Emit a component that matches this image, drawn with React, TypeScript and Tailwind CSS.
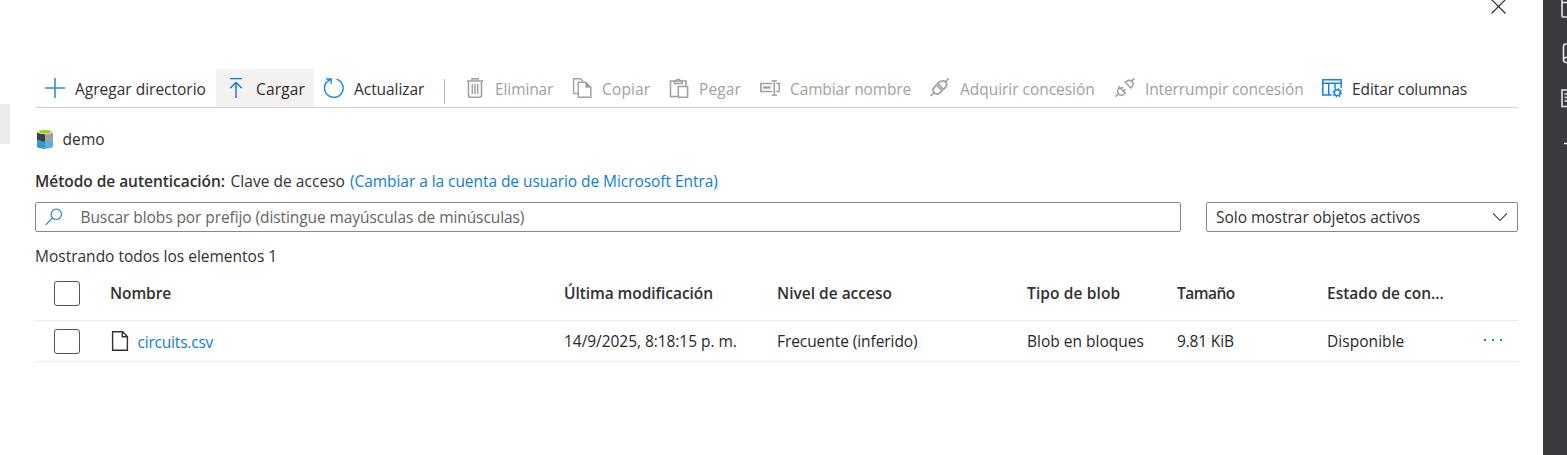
import React from "react";

type IconProps = { children: React.ReactNode; className?: string };

function Icon({ children, className = "" }: IconProps) {
  return (
    <svg
      viewBox="0 0 20 20"
      width="20"
      height="20"
      fill="none"
      stroke="currentColor"
      strokeWidth="1.2"
      className={"shrink-0 " + className}
    >
      {children}
    </svg>
  );
}

const PlusIcon = () => (
  <Icon className="text-[#2f8bdb]">
    <path d="M10 0v20M0 10h20" strokeWidth="1.6" />
  </Icon>
);

const UploadIcon = () => (
  <Icon className="text-[#1a73c4]">
    <path d="M4 .6h12M10 20V4.5M4.3 10L10 4.4l5.700 5.600" strokeWidth="1.4" />
  </Icon>
);

const RefreshIcon = () => (
  <Icon className="text-[#1583dc]">
    <path d="M12.6 1.200a9.300 9.300 0 1 1-7.900 1.100" strokeWidth="1.4" />
    <path d="M2.200 1h4.900v4.800" strokeWidth="1.4" />
    <path d="M7 1L4.300 3.300" strokeWidth="1.2" />
  </Icon>
);

const TrashIcon = () => (
  <Icon>
    <path d="M2 3h16M7 3V.8h6V3" strokeWidth="1.5" />
    <path d="M3.500 3v14.500a1.800 1.800 0 0 0 1.800 1.800h9.400a1.800 1.800 0 0 0 1.800-1.800V3" strokeWidth="1.6" />
    <path d="M7.300 6v10M10 6v10M12.700 6v10" strokeWidth="1.5" />
  </Icon>
);

const CopyIcon = () => (
  <Icon>
    <path d="M6 15.500H1.600V.7h6.800l2.800 2.800" strokeWidth="1.4" />
    <path d="M6.300 4.300h7.500l5 5v10H6.300z" strokeWidth="1.5" />
    <path d="M13.800 4.300v5h5z" fill="currentColor" strokeWidth=".8" />
  </Icon>
);

const PasteIcon = () => (
  <Icon>
    <path d="M8.800 18.500H1.500V3h15.500v5" strokeWidth="1.6" />
    <path d="M5.300 5.500V3h2.200a1.800 1.800 0 0 1 3.600 0h2.200v2.500z" strokeWidth="1.4" />
    <path d="M9.300 8.500h9.300v10.700H9.300z" strokeWidth="1.6" />
  </Icon>
);

const RenameIcon = () => (
  <Icon>
    <path d="M12.300 5.500H.9v8h11.400M16.300 5.500h3v8h-3" strokeWidth="1.7" />
    <path d="M3 9.500h7.500" strokeWidth="2.4" />
    <path d="M11.600 2.700h1.700l1 1 1-1H17M14.300 3.700v12.600M11.600 17.300h1.700l1-1 1 1H17" strokeWidth="1.5" />
  </Icon>
);

const ConnectIcon = () => (
  <Icon>
    <g strokeWidth="1.7">
      <path d="M.8 18l3.300-3.300M15.200 3.800L18.700.5" />
      <path d="M6.300 7L12 12.700l-2 2c-1.800 1.800-4 1.800-5.600.2s-1.600-4 .2-5.800zM7.600 5.400L13.500 11.300l1.700-1.700c1.800-1.800 1.800-4.200.3-5.700s-4-1.500-5.800.3z" />
    </g>
  </Icon>
);

const DisconnectIcon = () => (
  <Icon>
    <g strokeWidth="1.6">
      <path d="M.5 18.700l3-3M16.500 3L19.500.3" />
      <path d="M4.200 9L10.200 15l-1 1c-1.600 1.500-4 1.500-5.500.1-1.400-1.500-1.400-4 .1-5.500zM10.200 4.200l5.700 5.700 1.100-1.100c1.500-1.500 1.500-4 .1-5.400s-4-1.400-5.400 0z" />
      <path d="M6 10.800l2-2M8.300 13.100l2-2" />
    </g>
  </Icon>
);

const ColumnsIcon = () => (
  <Icon className="text-[#1583dc]">
    <path d="M9.700 17H.8V1.700h18.400V10M.8 5.300h18.400M6.700 5.300V17M13 5.300v5.200" strokeWidth="1.5" />
    <circle cx="15.300" cy="14.800" r="3" strokeWidth="1.5" />
    <circle cx="15.300" cy="14.800" r="4.200" strokeWidth="1.3" strokeDasharray="1.4 1.9" />
  </Icon>
);

type CommandProps = {
  icon: React.ReactNode;
  label: string;
  width: string;
  tracking?: string;
  state?: "normal" | "active" | "disabled";
};

function Command({ icon, label, width, tracking = "", state = "normal" }: CommandProps) {
  const tone =
    state === "disabled"
      ? "text-[#a3a19f]"
      : state === "active"
        ? "bg-[#f3f2f1] text-[#2b2a29]"
        : "text-[#323130]";
  return (
    <button className={"flex h-[38px] shrink-0 items-center gap-2.5 pl-2.5 " + tone + " " + width}>
      {icon}
      <span className={"pt-0.5 whitespace-nowrap " + tracking}>{label}</span>
    </button>
  );
}

function Checkbox() {
  return <span className="block h-[25px] w-[26px] rounded-[3px] border border-[#55534f]" />;
}

const grid =
  "grid grid-cols-[75px_454px_213px_250px_150px_150px_minmax(0,1fr)] items-center border-b border-[#edebe9]";

export default function App() {
  return (
    <div className="flex h-[455px] w-full overflow-hidden bg-white font-['Open_Sans',sans-serif] text-[15.5px] leading-5 text-[#323130]">
      <div className="w-[35px] shrink-0 pt-[104px]">
        <div className="h-10 w-2.5 bg-[#edebe9]" />
      </div>

      <main className="w-[1483px] shrink-0">
        <header className="flex h-[69px] justify-end pr-3">
          <svg width="15" height="15" viewBox="0 0 15 15" stroke="#323130" strokeWidth="1.2">
            <path d="M.5-.5l14 14M14.500-.5l-14 14" />
          </svg>
        </header>

        <nav className="flex h-[39px] border-b border-[#d2d0ce]">
          <Command icon={<PlusIcon />} label="Agregar directorio" width="w-[181px]" />
          <Command icon={<UploadIcon />} label="Cargar" width="w-[98px]" tracking="tracking-[0.15px]" state="active" />
          <Command icon={<RefreshIcon />} label="Actualizar" width="w-[120px]" tracking="tracking-[-0.05px]" />
          <div className="flex w-[21px] shrink-0 pt-2.5 pl-2.5">
            <div className="h-[25px] w-px bg-[#c0bebc]" />
          </div>
          <Command icon={<TrashIcon />} label="Eliminar" width="w-[107px]" tracking="tracking-[-0.1px]" state="disabled" />
          <Command icon={<CopyIcon />} label="Copiar" width="w-[97px]" tracking="tracking-[0.15px]" state="disabled" />
          <Command icon={<PasteIcon />} label="Pegar" width="w-[91px]" tracking="tracking-[0.1px]" state="disabled" />
          <Command icon={<RenameIcon />} label="Cambiar nombre" width="w-[170px]" tracking="tracking-[-0.12px]" state="disabled" />
          <Command icon={<ConnectIcon />} label="Adquirir concesión" width="w-[185px]" tracking="tracking-[-0.03px]" state="disabled" />
          <Command icon={<DisconnectIcon />} label="Interrumpir concesión" width="w-[207px]" tracking="tracking-[-0.11px]" state="disabled" />
          <Command icon={<ColumnsIcon />} label="Editar columnas" width="w-[165px]" tracking="tracking-[-0.1px]" />
        </nav>

        <div className="mt-[21px] flex h-5 items-center gap-[7.5px]">
          <svg width="20" height="20" viewBox="0 0 20 20">
            <path d="M2 2.500h8V19.500C5 19.500 2 18.500 2 17z" fill="#3c3c41" />
            <path d="M10 2.500h8V17c0 1.500-3 2.500-8 2.500z" fill="#a0a1a4" />
            <path d="M2 11.500q2-1.500 4 .3t4 .2v7.500c-5 0-8-1-8-2.500z" fill="#3999c6" />
            <path d="M10 12q2-1.500 4 0t4-.3V17c0 1.500-3 2.500-8 2.500z" fill="#59b4d9" />
            <ellipse cx="10" cy="2.700" rx="8" ry="2.500" fill="#eef3dc" />
            <ellipse cx="10" cy="2.700" rx="6" ry="1.700" fill="#a4c614" />
          </svg>
          <span className="tracking-[0.1px]">demo</span>
        </div>

        <div className="mt-[22px] flex h-5 whitespace-nowrap">
          <span className="w-[195.5px] font-semibold tracking-[-0.04px]">Método de autenticación:</span>
          <span className="w-[119.5px] tracking-[0.04px]">Clave de acceso</span>
          <a className="tracking-[-0.06px] text-[#0f7cd6]">(Cambiar a la cuenta de usuario de Microsoft Entra)</a>
        </div>

        <div className="mt-[11px] flex h-[30px] gap-[25px]">
          <div className="flex w-[1146px] items-center rounded-[2px] border border-[#8a8886] pl-[9px]">
            <svg width="18" height="18" viewBox="0 0 18 18" fill="none" stroke="#2387d9" strokeWidth="1.2">
              <circle cx="11.300" cy="6.300" r="5.200" />
              <path d="M7.500 10L.7 16.800" />
            </svg>
            <span className="ml-[17.5px] tracking-[-0.08px] text-[#666462]">
              Buscar blobs por prefijo (distingue mayúsculas de minúsculas)
            </span>
          </div>
          <div className="flex w-[312px] items-center justify-between rounded-[2px] border border-[#8a8886] pr-[9px] pl-[9px]">
            <span className="tracking-[-0.02px]">Solo mostrar objetos activos</span>
            <svg width="16" height="10" viewBox="0 0 16 10" fill="none" stroke="#55534f" strokeWidth="1.1">
              <path d="M1 1.500l7 7 7-7" />
            </svg>
          </div>
        </div>

        <div className="mt-[14px] h-[21px]">Mostrando todos los elementos 1</div>

        <section className="whitespace-nowrap">
          <div className={grid + " h-[54px] font-semibold"}>
            <span className="pl-[19px]"><Checkbox /></span>
            <span className="pb-0.5 tracking-[-0.1px]">Nombre</span>
            <span className="pb-0.5 tracking-[-0.07px]">Última modificación</span>
            <span className="pb-0.5">Nivel de acceso</span>
            <span className="pb-0.5 tracking-[0.12px]">Tipo de blob</span>
            <span className="pb-0.5 tracking-[-0.5px]">Tamaño</span>
            <span className="pb-0.5">Estado de con...</span>
          </div>
          <div className={grid + " h-[41px] text-[#292827]"}>
            <span className="pl-[19px]"><Checkbox /></span>
            <span className="flex items-center">
              <svg width="20" height="20" viewBox="0 0 20 20" fill="none" stroke="#323130" strokeWidth="1.4">
                <path d="M2.600.7h10l4.800 4.800v13.800H2.600z" />
                <path d="M12.300.9v4.900h4.900" />
              </svg>
              <a className="ml-[7.5px] pt-px tracking-[-0.2px] text-[#0f7cd6]">circuits.csv</a>
            </span>
            <span className="tracking-[-0.05px]">14/9/2025, 8:18:15 p. m.</span>
            <span className="tracking-[-0.07px]">Frecuente (inferido)</span>
            <span>Blob en bloques</span>
            <span className="tracking-[-0.17px]">9.81 KiB</span>
            <span className="flex items-center justify-between pr-[15px]">
              <span className="tracking-[0.05px]">Disponible</span>
              <svg width="19" height="4" viewBox="0 0 19 4" fill="#1583dc" shapeRendering="crispEdges">
                <path d="M0 0h2v2H0zM8 0h2v2H8zM16 0h2v2h-2z" />
              </svg>
            </span>
          </div>
        </section>
      </main>

      <aside className="ml-[25px] w-6 shrink-0 overflow-hidden bg-[#3b3a3f]">
        <svg width="24" height="160" viewBox="0 0 24 160" fill="none" stroke="#e8e8ea" strokeWidth="1.6">
          <path d="M30 17H20a1 1 0 0 1-1-1V0M19 2.500h11" />
          <path d="M30 44h-7a2.500 2.500 0 0 0-2.500 2.500v13A2.500 2.500 0 0 0 23 62.500h7M20.500 60a2.500 2.500 0 0 1 2.500-2.500h7" />
          <path d="M30 90H19v16.500h11M21.500 94H30M21.500 97.500H30M21.500 101H30" />
          <path d="M21 143.500h9" />
        </svg>
      </aside>
    </div>
  );
}
